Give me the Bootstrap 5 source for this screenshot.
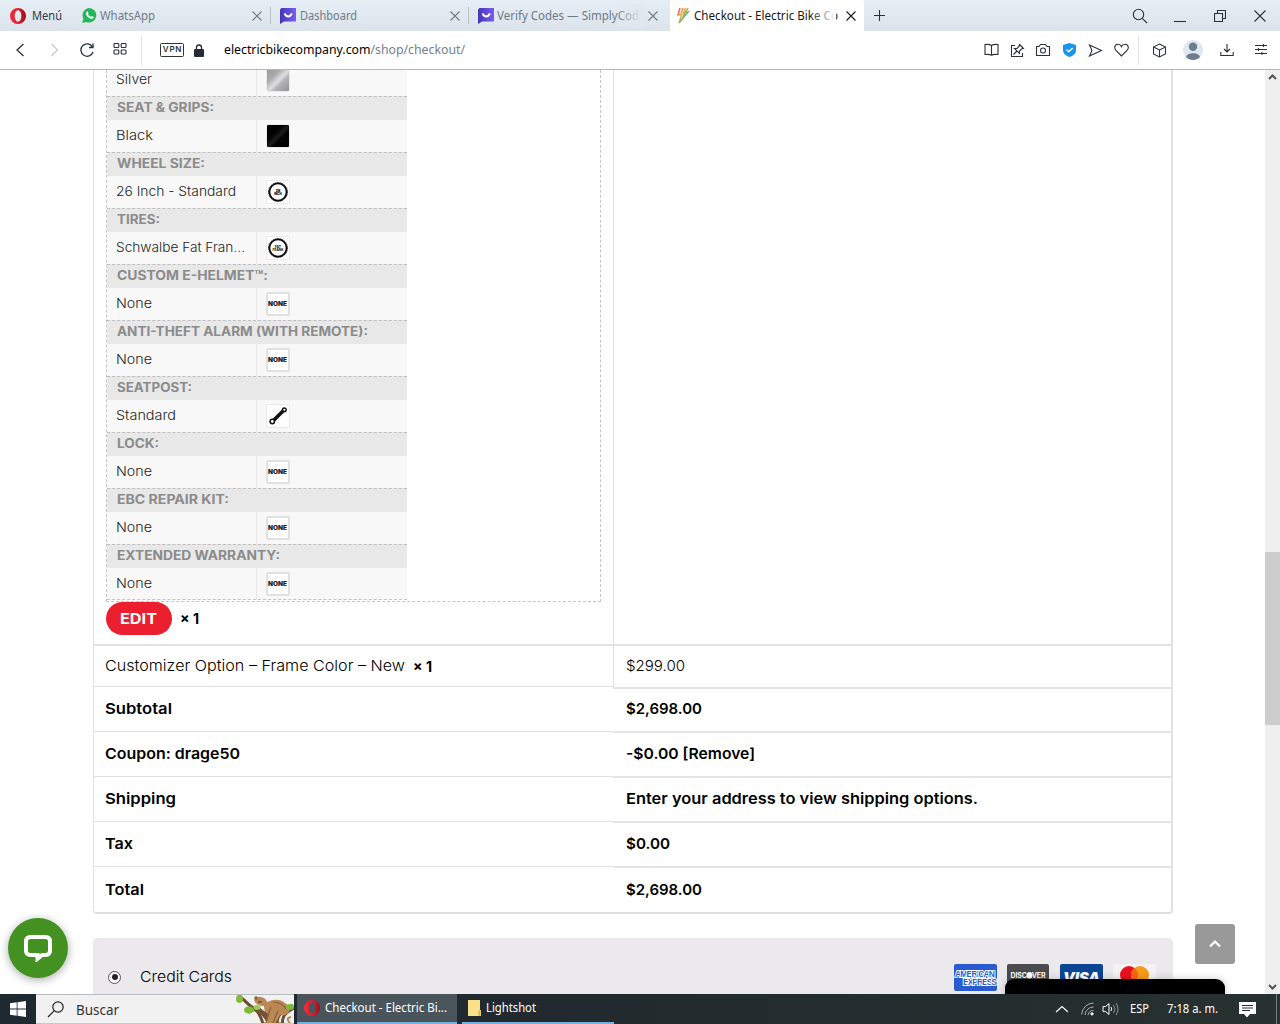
<!DOCTYPE html>
<html lang="es">
<head>
<meta charset="utf-8">
<title>Checkout - Electric Bike Company</title>
<link href="https://cdn.jsdelivr.net/npm/bootstrap@5.3.0/dist/css/bootstrap.min.css" rel="stylesheet">
<script src="https://cdn.jsdelivr.net/npm/bootstrap@5.3.0/dist/js/bootstrap.bundle.min.js"></script>
<style>
body{width:1280px;height:1024px;overflow:hidden;background:#fff;font-family:Inter,sans-serif;color:#000;font-size:15px}
svg{display:block;flex:none}
.fit{display:inline-block;white-space:nowrap;transform-origin:0 50%;flex:none}
.ui{font-family:"Noto Sans","Open Sans",sans-serif;font-size:12px}
.ln{fill:none;stroke:#2b323b;stroke-width:1.1}
/* browser chrome */
.tabstrip{height:31px;background:linear-gradient(#e5edf5,#dce3eb);flex:none}
.menu-btn{width:73px;padding-left:10px;gap:6px;color:#333b45}
.btab{width:198px;padding:0 9px 0 9px;color:#6f7b88;position:relative;height:31px}
.btab+.btab::before{content:"";position:absolute;left:-1px;top:7px;height:17px;width:1px;background:#b9c1ca}
.btab.on{width:194px;background:#fff;color:#16191d;padding:0 8px 0 6px;border-radius:2px 2px 0 0}
.btab.on::before{display:none}
.btab .fade-end{position:absolute;right:28px;top:4px;width:26px;height:24px;background:linear-gradient(90deg,#e1e8f000,#e1e8f0)}
.btab.on .fade-end{background:linear-gradient(90deg,#fff0,#fff)}
.winbtn{width:40px}
.addr{height:39px;border-bottom:1px solid #b4b6b8;background:#fff;flex:none}
.c33{width:33px}.c26{width:26px}.c34{width:33.6px}
.vsep{width:1px;height:29px;background:#e2e5e8}
.vpn{width:24px;height:14px;border:1.3px solid #2b323b;border-radius:1.5px;font:600 8px/11px Inter,sans-serif;letter-spacing:.8px;text-align:center;color:#2b323b;padding-left:1px}
/* page */
.viewport{height:924px;flex:none;overflow:hidden;position:relative}
.page-col{width:1265px;padding-left:93px}
.scroller{width:15px;background:#efefef;padding:3px 0}
.thumb{width:15px;height:173px;background:#cdcdcd;margin-top:474px}
.order{width:1080px;border:1px solid #e2e2e2;border-right:2px solid #e2e2e2;border-bottom:2px solid #dedede;border-top:0;border-radius:0 0 4px 4px;height:844px}
.cell-l{width:519px;padding-left:11px}
.cell-r{width:558px;padding-left:13px}
.item{height:574px}
.item .cell-l{border-right:0;padding-left:12px}
.item .cell-r,.opt-row .cell-r{border-left:1px solid #e2e2e2;width:559px}
.opt-row{height:44px;border-top:2px solid #e2e2e2;font-weight:300}
.opt-row .cell-l{border-bottom:1px solid #e2e2e2}
.opt-row .cell-r{border-bottom:2px solid #e4e4e4;padding-left:12px}
.opt-row .cell-l{height:41px}
.opt-row .cell-r{height:43px}
.sum{height:45px;font-weight:600}
.sum .cell-l{height:44px;border-bottom:1px solid #e2e2e2}
.sum .cell-r{width:559px;padding-left:13px;height:45px;border-bottom:2px solid #e4e4e4}
.sum:last-child .cell-l,.sum:last-child .cell-r{border-bottom:0}
.optbox{width:495px;height:532px;border:1px dashed #c4c4c4;border-top:0;overflow:hidden}
.opts{width:300px;margin-top:-6px}
.hd{height:24px;border-top:1px dashed #bfbfbf;background:#e8e8e8;color:#8b8b8b;font-weight:700;font-size:12.5px;padding-left:9.5px}
.val{height:32px;background:#f8f8f8;font-size:13px;font-weight:300;color:#1d1d1d}
.val>div:first-child{width:150px;height:32px;border-right:1px solid #e6e6e6;padding-left:9px}
.val>div:last-child{padding-left:9px}
.opts .val:last-child{border-bottom:1px dashed #c4c4c4}
.sw{width:24px;height:24px;border:1px solid #e9e9e9;border-radius:2px;background:#fff;overflow:hidden}
.sw.no{border:2px solid #e1e1e1;font-size:5.6px;font-weight:900;line-height:20px}
.silver{background:linear-gradient(135deg,#9b9b9f,#a9a9ac 30%,#dfdfe1 52%,#b4b4b7 65%,#929295)}
.black{background:linear-gradient(135deg,#020202 35%,#1c1c1c 52%,#020202 62%)}
.edit{width:66px;height:33px;border-radius:17px;background:#eb1f2d;color:#fff;font-weight:700;font-size:15px;padding:0 0 0 14px;border:0;line-height:33px;text-align:left}
.pay{margin-top:24px;width:1080px;height:60px;background:#ebe9eb;border-radius:5px 5px 0 0;padding:26px 17px 0 15px;font-weight:300}
.radio-dot{width:13px;height:13px;border:1px solid #555;border-radius:50%;background:#fff;margin-right:19px;margin-left:0}
.radio-dot::after{content:"";width:6px;height:6px;border-radius:50%;background:#222}
.chat{position:absolute;left:8px;top:848px;width:60px;height:60px;border-radius:50%;background:#439221;box-shadow:0 2px 10px #0005}
.totop{position:absolute;left:1195px;top:854px;width:40px;height:40px;border-radius:3px;background:#999}
.dock{position:absolute;left:1005px;top:909px;width:220px;height:20px;border-radius:9px 9px 0 0;background:#000;box-shadow:0 0 8px #0003}
/* taskbar */
.taskbar{height:30px;background:linear-gradient(90deg,#1d2830,#222a2e 50%,#263130);color:#fff;flex:none}
.find{width:258px;background:#f1f1f1;border-top:1px solid #b9bcbe;border-bottom:1px solid #c9c9c9;color:#333;padding-left:11px;font-size:15px;overflow:hidden}
.task{height:30px;border-bottom:2px solid #76b0dc;padding-left:7px;gap:5px}
</style>
</head>
<body class="d-flex flex-column">
<svg width="0" height="0" class="position-absolute">
  <defs>
    <linearGradient id="og" x1="0" x2="1"><stop offset="0" stop-color="#f52b3c"/><stop offset=".55" stop-color="#e01b2d"/><stop offset="1" stop-color="#96101d"/></linearGradient>
    <linearGradient id="vg" x1="0" x2="1"><stop offset="0" stop-color="#4336b8"/><stop offset="1" stop-color="#7a5cf2"/></linearGradient>
    <linearGradient id="bg" x1="0" x2="1" y2="1"><stop offset="0" stop-color="#e63b68"/><stop offset=".4" stop-color="#efb13a"/><stop offset=".7" stop-color="#42b68c"/><stop offset="1" stop-color="#3a87d8"/></linearGradient>
    <symbol id="opera" viewBox="0 0 16 16"><path fill="url(#og)" fill-rule="evenodd" d="M8 0a8 8 0 1 0 0 16A8 8 0 0 0 8 0zm0 2.3c2 0 3.3 2.5 3.3 5.7S10 13.7 8 13.7 4.7 11.200 4.700 8 6 2.300 8 2.300z"/></symbol>
    <symbol id="simply" viewBox="0 0 16 16"><path fill="url(#vg)" d="M1.500 0h14.500v13.500H4L0 16V1.500z"/><path d="M4.500 5.500q1.500 3 3.700 3t3.700-3" fill="none" stroke="#fff" stroke-width="1.900"/></symbol>
    <symbol id="x" viewBox="0 0 10 10"><path d="M.5.5l9 9m0-9l-9 9" fill="none" stroke="currentColor" stroke-width="1.100"/></symbol>
    <symbol id="mag" viewBox="0 0 16 16"><circle cx="6.500" cy="6.500" r="5.200" class="ln"/><path d="M10.300 10.300l4.700 4.700" class="ln"/></symbol>
    <symbol id="tire" viewBox="0 0 22 22"><circle cx="11" cy="11" r="8.600" fill="#fff" stroke="#0b0b0b" stroke-width="1.800"/><circle cx="11" cy="11" r="9.500" fill="none" stroke="#0b0b0b" stroke-width=".8" stroke-dasharray="1.500 .8"/></symbol>
  </defs>
</svg>

<header class="tabstrip d-flex align-items-center ui">
  <div class="menu-btn d-flex align-items-center"><svg width="16" height="16"><use href="#opera"/></svg><span class="fit" data-w="30">Menú</span></div>
  <div class="btab d-flex align-items-center">
    <svg width="15" height="15" viewBox="0 0 15 15"><path fill="#20b858" d="M7.700 0a7.200 7.200 0 0 0-6.300 10.700L.2 15l4.300-1.100A7.200 7.200 0 1 0 7.700 0z"/><path fill="#fff" d="M5 3.500c.6-.3.900 0 1.500 1.500.2.500-.6 1-.5 1.300.7 1.300 1.600 2 2.700 2.500.4.100.8-1 1.200-.9l1.600.8c.4.3-.2 2-1.700 2.200C7.700 11.200 4 8 3.800 5.600c0-.8.500-1.600 1.200-2.100z"/></svg>
    <span class="fit" style="margin-left:3px" data-w="55">WhatsApp</span><svg class="ms-auto" width="10" height="10"><use href="#x"/></svg>
  </div>
  <div class="btab d-flex align-items-center">
    <svg width="16" height="16"><use href="#simply"/></svg><span class="fit ms-1" data-w="57">Dashboard</span><svg class="ms-auto" width="10" height="10"><use href="#x"/></svg>
  </div>
  <div class="btab d-flex align-items-center" style="width:201px;padding-right:12px">
    <svg width="16" height="16"><use href="#simply"/></svg><span class="fit" style="margin-left:3px" data-w="142">Verify Codes — SimplyCod</span><i class="fade-end"></i><svg class="ms-auto" width="10" height="10"><use href="#x"/></svg>
  </div>
  <div class="btab on d-flex align-items-center">
    <svg width="15" height="17" viewBox="0 0 15 17"><path d="M4 1L2 8l4-1-3 9 9-11-3 1 3-5M7 1L5 6m4.500-5L7 7M6 13l3-8" fill="none" stroke="url(#bg)" stroke-width="1.500"/></svg>
    <span class="fit" style="margin-left:3px" data-w="144">Checkout - Electric Bike Co</span><i class="fade-end"></i><svg class="ms-auto" width="10" height="10"><use href="#x"/></svg>
  </div>
  <svg style="margin-left:10px" width="11" height="11" viewBox="0 0 11 11"><path d="M5.500 0v11M0 5.500h11" class="ln"/></svg>
  <div class="d-flex ms-auto align-items-center">
    <div class="winbtn d-flex justify-content-center"><svg width="16" height="16"><use href="#mag"/></svg></div>
    <div class="winbtn d-flex justify-content-center"><svg width="12" height="14" viewBox="0 0 12 14"><path d="M0 12.500h12" class="ln"/></svg></div>
    <div class="winbtn d-flex justify-content-center"><svg width="12" height="12" viewBox="0 0 12 12"><path d="M.5 3.500h8v8h-8zM3.500 3.500v-3h8v8h-3" class="ln"/></svg></div>
    <div class="winbtn d-flex justify-content-center"><svg width="12" height="12" viewBox="0 0 12 12"><path d="M.5.5l11 11m0-11l-11 11" class="ln"/></svg></div>
  </div>
</header>

<nav class="addr d-flex align-items-center ui">
  <div class="d-flex ps-1">
    <div class="c33 d-flex justify-content-center"><svg width="16" height="16" viewBox="0 0 16 16"><path d="M10.500 2l-6.500 6 6.500 6" class="ln" style="stroke-width:1.300"/></svg></div>
    <div class="c33 d-flex justify-content-center"><svg width="16" height="16" viewBox="0 0 16 16"><path d="M5.500 2l6 6-6 6" class="ln" style="stroke:#c3c7cb"/></svg></div>
    <div class="c33 d-flex justify-content-center"><svg width="16" height="16" viewBox="0 0 16 16"><path d="M13.500 5A6.200 6.200 0 1 0 14 10M14 1.500v4h-4" class="ln" style="stroke-width:1.300"/></svg></div>
    <div class="c33 d-flex justify-content-center"><svg width="14" height="14" viewBox="0 0 14 14"><g class="ln"><rect x="1" y="1.500" width="4.800" height="4" rx=".8"/><rect x="8.200" y="1.500" width="4.800" height="4" rx=".8"/><rect x="1" y="8" width="4.800" height="4" rx=".8"/><rect x="8.200" y="8" width="4.800" height="4" rx=".8"/></g></svg></div>
  </div>
  <div class="vsep" style="margin-left:5px"></div>
  <div class="vpn" style="margin-left:18px">VPN</div>
  <svg style="margin-left:10px" width="10" height="13" viewBox="0 0 10 13"><rect y="5" width="10" height="8" rx="1" fill="#262c36"/><path d="M2.500 5V3.500a2.500 2.500 0 0 1 5 0V5" fill="none" stroke="#262c36" stroke-width="1.300"/></svg>
  <span class="fit" style="margin-left:20px;font-size:13px" data-w="241">electricbikecompany.com<span style="color:#75808c">/shop/checkout/</span></span>
  <div class="d-flex align-items-center ms-auto" style="width:302px">
    <div class="c26 d-flex justify-content-center"><svg width="15" height="14" viewBox="0 0 15 14"><path d="M7.500 2.500C6 1.300 3 1.300 1 1.500v10c2-.2 5-.2 6.500.7C9 11.300 12 11.300 14 11.500v-10c-2-.2-5-.2-6.500 1v9.700" class="ln"/></svg></div>
    <div class="c26 d-flex justify-content-center"><svg width="15" height="15" viewBox="0 0 15 15"><path d="M5 2.500H1.500v11h11V10M9.500 1.500l4 4-2 .5-2 2v2.500l-5-5H7l2-2zM7 8l-3.500 3.500" class="ln"/></svg></div>
    <div class="c26 d-flex justify-content-center"><svg width="16" height="14" viewBox="0 0 16 14"><path d="M1.500 3.500H4l1.500-2h5l1.500 2h2.500v9h-13z" class="ln"/><circle cx="8" cy="7.500" r="2.500" class="ln"/></svg></div>
    <div class="c26 d-flex justify-content-center"><svg width="13" height="14" viewBox="0 0 13 14"><path fill="#1695ee" d="M6.500 0L13 2v5c0 3.500-3 6-6.500 7C3 13 0 10.500 0 7V2z"/><path d="M3.500 6.500l2.200 2.200L9.700 5" fill="none" stroke="#fff" stroke-width="1.400"/></svg></div>
    <div class="c26 d-flex justify-content-center"><svg width="15" height="13" viewBox="0 0 15 13"><path d="M1.500 1l12 5.500-12 5.500L4 6.500z" class="ln"/></svg></div>
    <div class="c26 d-flex justify-content-center"><svg width="15" height="14" viewBox="0 0 15 14"><path d="M7.500 13L2 7.500C-.5 4.500 1 1.300 4 1.300c1.700 0 3 1 3.500 2.200.5-1.200 1.800-2.200 3.500-2.200 3 0 4.500 3.200 2 6.200z" class="ln"/></svg></div>
    <div class="vsep" style="margin:0 4px"></div>
    <div class="c34 d-flex justify-content-center"><svg width="15" height="15" viewBox="0 0 15 15"><path d="M7.500 1l6 3v7l-6 3-6-3V4zM1.500 4l6 3 6-3M7.500 7v7" class="ln"/></svg></div>
    <div class="c34 d-flex justify-content-center"><svg width="20" height="20" viewBox="0 0 20 20"><circle cx="10" cy="10" r="10" fill="#dfe7f0"/><circle cx="10" cy="6.800" r="4.200" fill="#6d7d90"/><path d="M3 17c1-5 13-5 14 0-3.500 4-10.500 4-14 0z" fill="#6d7d90"/></svg></div>
    <div class="c34 d-flex justify-content-center"><svg width="14" height="14" viewBox="0 0 14 14"><path d="M7 1v8M4 6l3 3 3-3M.8 9v3.500h12.400V9" class="ln"/></svg></div>
    <div class="c34 d-flex justify-content-center"><svg width="14" height="14" viewBox="0 0 14 14"><path d="M1 2.500h12M1 6.500h12M1 10.500h12M9.500 1v3M4.500 5v3M8 9v3" class="ln"/></svg></div>
  </div>
</nav>

<main class="viewport d-flex">
  <div class="page-col">
    <div class="order">
      <div class="item d-flex">
        <div class="cell-l">
          <div class="optbox">
            <div class="opts">
              <div class="val d-flex align-items-center"><div class="d-flex align-items-center"><span class="fit" data-w="36">Silver</span></div><div><div class="sw silver"></div></div></div>
              <div class="hd d-flex align-items-center"><span class="fit" data-w="97">SEAT &amp; GRIPS:</span></div>
              <div class="val d-flex align-items-center"><div class="d-flex align-items-center"><span class="fit" data-w="37">Black</span></div><div><div class="sw black"></div></div></div>
              <div class="hd d-flex align-items-center"><span class="fit" data-w="88">WHEEL SIZE:</span></div>
              <div class="val d-flex align-items-center"><div class="d-flex align-items-center"><span class="fit" data-w="120">26 Inch - Standard</span></div><div><div class="sw"><svg width="22" height="22"><use href="#tire"/><text x="11" y="11" font-size="3.500" font-weight="900" text-anchor="middle">26</text><text x="11" y="14" font-size="3" font-weight="900" text-anchor="middle">INCH</text></svg></div></div></div>
              <div class="hd d-flex align-items-center"><span class="fit" data-w="43">TIRES:</span></div>
              <div class="val d-flex align-items-center"><div class="d-flex align-items-center"><span class="fit" data-w="129">Schwalbe Fat Fran...</span></div><div><div class="sw"><svg width="22" height="22"><use href="#tire"/><text x="11" y="11" font-size="3.500" font-weight="700" text-anchor="middle">FAT</text><text x="11" y="14" font-size="3.200" font-weight="700" text-anchor="middle">FRANK</text></svg></div></div></div>
              <div class="hd d-flex align-items-center"><span class="fit" data-w="151">CUSTOM E-HELMET™:</span></div>
              <div class="val d-flex align-items-center"><div class="d-flex align-items-center"><span class="fit" data-w="36">None</span></div><div><div class="sw no"><span class="fit" data-w="19">NONE</span></div></div></div>
              <div class="hd d-flex align-items-center"><span class="fit" data-w="251">ANTI-THEFT ALARM (WITH REMOTE):</span></div>
              <div class="val d-flex align-items-center"><div class="d-flex align-items-center"><span class="fit" data-w="36">None</span></div><div><div class="sw no"><span class="fit" data-w="19">NONE</span></div></div></div>
              <div class="hd d-flex align-items-center"><span class="fit" data-w="75">SEATPOST:</span></div>
              <div class="val d-flex align-items-center"><div class="d-flex align-items-center"><span class="fit" data-w="60">Standard</span></div><div><div class="sw"><svg width="22" height="22" viewBox="0 0 22 22"><path d="M6 16L17 5" stroke="#111" stroke-width="3.600"/><circle cx="5.300" cy="16.500" r="2.200" fill="#fff" stroke="#111" stroke-width="1.500"/><circle cx="17.300" cy="4.800" r="1.800" fill="#fff" stroke="#111" stroke-width="1.500"/></svg></div></div></div>
              <div class="hd d-flex align-items-center"><span class="fit" data-w="42">LOCK:</span></div>
              <div class="val d-flex align-items-center"><div class="d-flex align-items-center"><span class="fit" data-w="36">None</span></div><div><div class="sw no"><span class="fit" data-w="19">NONE</span></div></div></div>
              <div class="hd d-flex align-items-center"><span class="fit" data-w="112">EBC REPAIR KIT:</span></div>
              <div class="val d-flex align-items-center"><div class="d-flex align-items-center"><span class="fit" data-w="36">None</span></div><div><div class="sw no"><span class="fit" data-w="19">NONE</span></div></div></div>
              <div class="hd d-flex align-items-center"><span class="fit" data-w="163">EXTENDED WARRANTY:</span></div>
              <div class="val d-flex align-items-center"><div class="d-flex align-items-center"><span class="fit" data-w="36">None</span></div><div><div class="sw no"><span class="fit" data-w="19">NONE</span></div></div></div>
            </div>
          </div>
          <div class="d-flex align-items-center">
            <button class="edit"><span class="fit" data-w="37">EDIT</span></button><span class="fit fw-bold" style="margin-left:8px;font-size:14px" data-w="19">× 1</span>
          </div>
        </div>
        <div class="cell-r"></div>
      </div>
      <div class="opt-row d-flex">
        <div class="cell-l d-flex align-items-center"><span class="fit" data-w="300">Customizer Option – Frame Color – New</span><span class="fit fw-bold" style="margin-left:8px;font-size:14px" data-w="19">× 1</span></div>
        <div class="cell-r d-flex align-items-center"><span class="fit" data-w="59">$299.00</span></div>
      </div>
      <div class="sum d-flex"><div class="cell-l d-flex align-items-center"><span class="fit" data-w="67">Subtotal</span></div><div class="cell-r d-flex align-items-center"><span class="fit" data-w="76">$2,698.00</span></div></div>
      <div class="sum d-flex"><div class="cell-l d-flex align-items-center"><span class="fit" data-w="135">Coupon: drage50</span></div><div class="cell-r d-flex align-items-center"><span class="fit" data-w="129">-$0.00 [Remove]</span></div></div>
      <div class="sum d-flex"><div class="cell-l d-flex align-items-center"><span class="fit" data-w="71">Shipping</span></div><div class="cell-r d-flex align-items-center"><span class="fit" data-w="352">Enter your address to view shipping options.</span></div></div>
      <div class="sum d-flex"><div class="cell-l d-flex align-items-center"><span class="fit" data-w="28">Tax</span></div><div class="cell-r d-flex align-items-center"><span class="fit" data-w="44">$0.00</span></div></div>
      <div class="sum d-flex"><div class="cell-l d-flex align-items-center"><span class="fit" data-w="39">Total</span></div><div class="cell-r d-flex align-items-center"><span class="fit" data-w="76">$2,698.00</span></div></div>
    </div>
    <div class="pay d-flex align-items-start">
      <div class="d-flex align-items-center" style="height:26px"><div class="radio-dot d-flex align-items-center justify-content-center"></div><span class="fit" data-w="92">Credit Cards</span></div>
      <div class="d-flex ms-auto" style="gap:10px">
        <svg width="43" height="27" viewBox="0 0 43 27"><rect width="43" height="27" rx="2" fill="#2c5bd0"/><g font-family="Liberation Sans" font-weight="700" font-size="8.500" fill="#2c5bd0" stroke="#fff" stroke-width="1.800" paint-order="stroke"><text x="1" y="12.500" textLength="40">AMERICAN</text><text x="9" y="21" textLength="34">EXPRESS</text></g></svg>
        <svg width="43" height="27" viewBox="0 0 43 27"><rect width="42" height="27" rx="2" fill="#4b4b4d"/><text x="3.500" y="14" font-size="7" font-weight="700" fill="#fff" textLength="35">DISCOVER</text><circle cx="22.500" cy="11.500" r="3" fill="#fff"/></svg>
        <svg width="43" height="27" viewBox="0 0 43 27"><rect width="43" height="27" rx="2" fill="#0d4595"/><text x="3" y="19" font-size="15" font-weight="900" font-style="italic" fill="#fff" textLength="37">VISA</text></svg>
        <svg width="43" height="27" viewBox="0 0 43 27"><rect width="43" height="27" rx="2" fill="#f4f2f3"/><circle cx="16" cy="11" r="9" fill="#eb1020"/><circle cx="27" cy="11" r="9" fill="#f79a1c"/><path d="M21.500 3.900a9 9 0 0 1 0 14.200 9 9 0 0 1 0-14.200z" fill="#fb6414"/></svg>
      </div>
    </div>
  </div>
  <div class="scroller d-flex flex-column align-items-center">
    <svg width="9" height="8" viewBox="0 0 9 8"><path d="M1 6l3.500-3.500L8 6" fill="none" stroke="#555" stroke-width="2"/></svg>
    <div class="thumb" style="margin-top:471px"></div>
    <svg class="mt-auto" width="9" height="8" viewBox="0 0 9 8"><path d="M1 2l3.500 3.500L8 2" fill="none" stroke="#555" stroke-width="2"/></svg>
  </div>
  <div class="chat d-flex align-items-center justify-content-center"><svg width="28" height="28" viewBox="0 0 28 28"><path fill="none" stroke="#fff" stroke-width="4" d="M6.500 3h15Q26 3 26 7.500v9Q26 21 21.500 21H18l-4.500 3.800V21h-7Q2 21 2 16.500v-9Q2 3 6.500 3z"/></svg></div>
  <div class="totop d-flex align-items-center justify-content-center"><svg width="14" height="10" viewBox="0 0 14 10"><path d="M2 7.500l5-5 5 5" fill="none" stroke="#fff" stroke-width="2.200"/></svg></div>
  <div class="dock"></div>
</main>

<footer class="taskbar d-flex align-items-center ui">
  <div class="d-flex justify-content-center" style="width:36px"><svg width="16" height="16" viewBox="0 0 16 16"><path fill="#fff" d="M0 2.300l6.700-1v6.300H0zM7.500 1.200L16 0v7.600H7.500zM0 8.400h6.700v6.300l-6.700-1zM7.500 8.400H16V16l-8.500-1.200z"/></svg></div>
  <div class="find d-flex align-items-center h-100">
    <svg width="18" height="17" viewBox="0 0 18 17"><circle cx="11" cy="6" r="5.200" fill="none" stroke="#222" stroke-width="1.200"/><path d="M7.300 9.700L1 16" stroke="#222" stroke-width="1.200"/></svg>
    <span class="fit" style="margin-left:11px" data-w="43">Buscar</span>
    <svg class="ms-auto" width="58" height="30" viewBox="0 0 58 30">
      <path d="M2 1c6 4 9 9 14 12s9 9 11 17h20c-2-6 3-12 11-16" fill="none" stroke="#6b4c35" stroke-width="3"/><path d="M8 0l4 10M17 17q10 2 14 13h12q-2-10 15-18l-2-2q-10 6-15 11-10 0-19-9z" fill="#765338"/>
      <path d="M18 6q2-4 7-3 5 1 6 5 11-5 18 1 6 4 4 9-4 5-9 3l-5 9h-9l3-10q-5-1-5-8-8 0-10-6z" fill="#b98855"/><path d="M37 8q9 0 13 7M35 13l-4 12M42 17l-5 12" fill="none" stroke="#8d6038" stroke-width="1.200"/><circle cx="20" cy="4" r="1.700" fill="#8d6038"/><path d="M22 8h4" stroke="#493020"/><path d="M54 29q-5-5 1-6" fill="none" stroke="#b98855" stroke-width="2"/>
      <ellipse cx="3.500" cy="5" rx="3.500" ry="4" fill="#86b940"/><ellipse cx="13" cy="16" rx="5" ry="3.700" fill="#7bb937"/><ellipse cx="21" cy="13.500" rx="3.500" ry="2.500" fill="#9acb50"/><ellipse cx="54" cy="13" rx="4" ry="3" fill="#7bb937"/>
    </svg>
  </div>
  <div class="task d-flex align-items-center" style="width:160px;margin-left:3px;background:#4a555b"><svg width="16" height="16"><use href="#opera"/></svg><span class="fit" data-w="122">Checkout - Electric Bi...</span></div>
  <div class="task d-flex align-items-center" style="width:152px;margin-left:5px;padding-left:6px"><svg width="13" height="16" viewBox="0 0 13 16"><path d="M0 0h12v10h1v6H0z" fill="#fbe08a"/><path d="M10.500 16v-5l2-1v6z" fill="#d8b447"/></svg><span class="fit" data-w="50">Lightshot</span></div>
  <div class="d-flex align-items-center ms-auto" style="width:225px">
    <svg width="14" height="8" viewBox="0 0 14 8"><path d="M1 7l6-5.500L13 7" fill="none" stroke="#fff" stroke-width="1.200"/></svg>
    <svg style="margin-left:12px" width="14" height="14" viewBox="0 0 14 14"><path d="M.7 12.500A12 12 0 0 1 12.500 1M4 13a8.500 8.500 0 0 1 8.500-8M7 13a5.500 5.500 0 0 1 5.500-4.500" fill="none" stroke="#aab0b2"/><circle cx="11" cy="11.800" r="1.600" fill="#fff"/></svg>
    <svg style="margin-left:7px" width="17" height="14" viewBox="0 0 17 14"><path d="M1 4.500h2.500l3.500-3v11l-3.500-3H1z" fill="none" stroke="#fff"/><path d="M9 5q1.500 2 0 4" fill="none" stroke="#fff"/><path d="M11.500 3q3 4 0 8M14 1q4 6 0 12" fill="none" stroke="#8e9698"/></svg>
    <span class="fit" style="margin-left:11px" data-w="19">ESP</span>
    <span class="fit" style="margin-left:18px" data-w="51">7:18 a. m.</span>
    <svg style="margin-left:21px" width="17" height="17" viewBox="0 0 17 17"><path fill="#fff" d="M0 1h17v12h-6l-3 3.500L5 13H0z"/><path d="M3 4.500h11M3 7h11M3 9.500h8" stroke="#263130"/></svg>
    <div style="width:1px;height:30px;background:#78807f;margin-left:20px"></div>
  </div>
</footer>
<script>
document.querySelectorAll('.fit').forEach(function (el) {
  var w = +el.dataset.w, n = el.getBoundingClientRect().width;
  el.style.width = w + 'px';
  el.style.transform = 'scaleX(1)';
  var inner = document.createElement('span');
  inner.className = 'd-inline-block';
  inner.style.transformOrigin = '0 50%';
  inner.style.transform = 'scaleX(' + (w / n) + ')';
  while (el.firstChild) inner.appendChild(el.firstChild);
  el.appendChild(inner);
});
</script>
</body>
</html>
